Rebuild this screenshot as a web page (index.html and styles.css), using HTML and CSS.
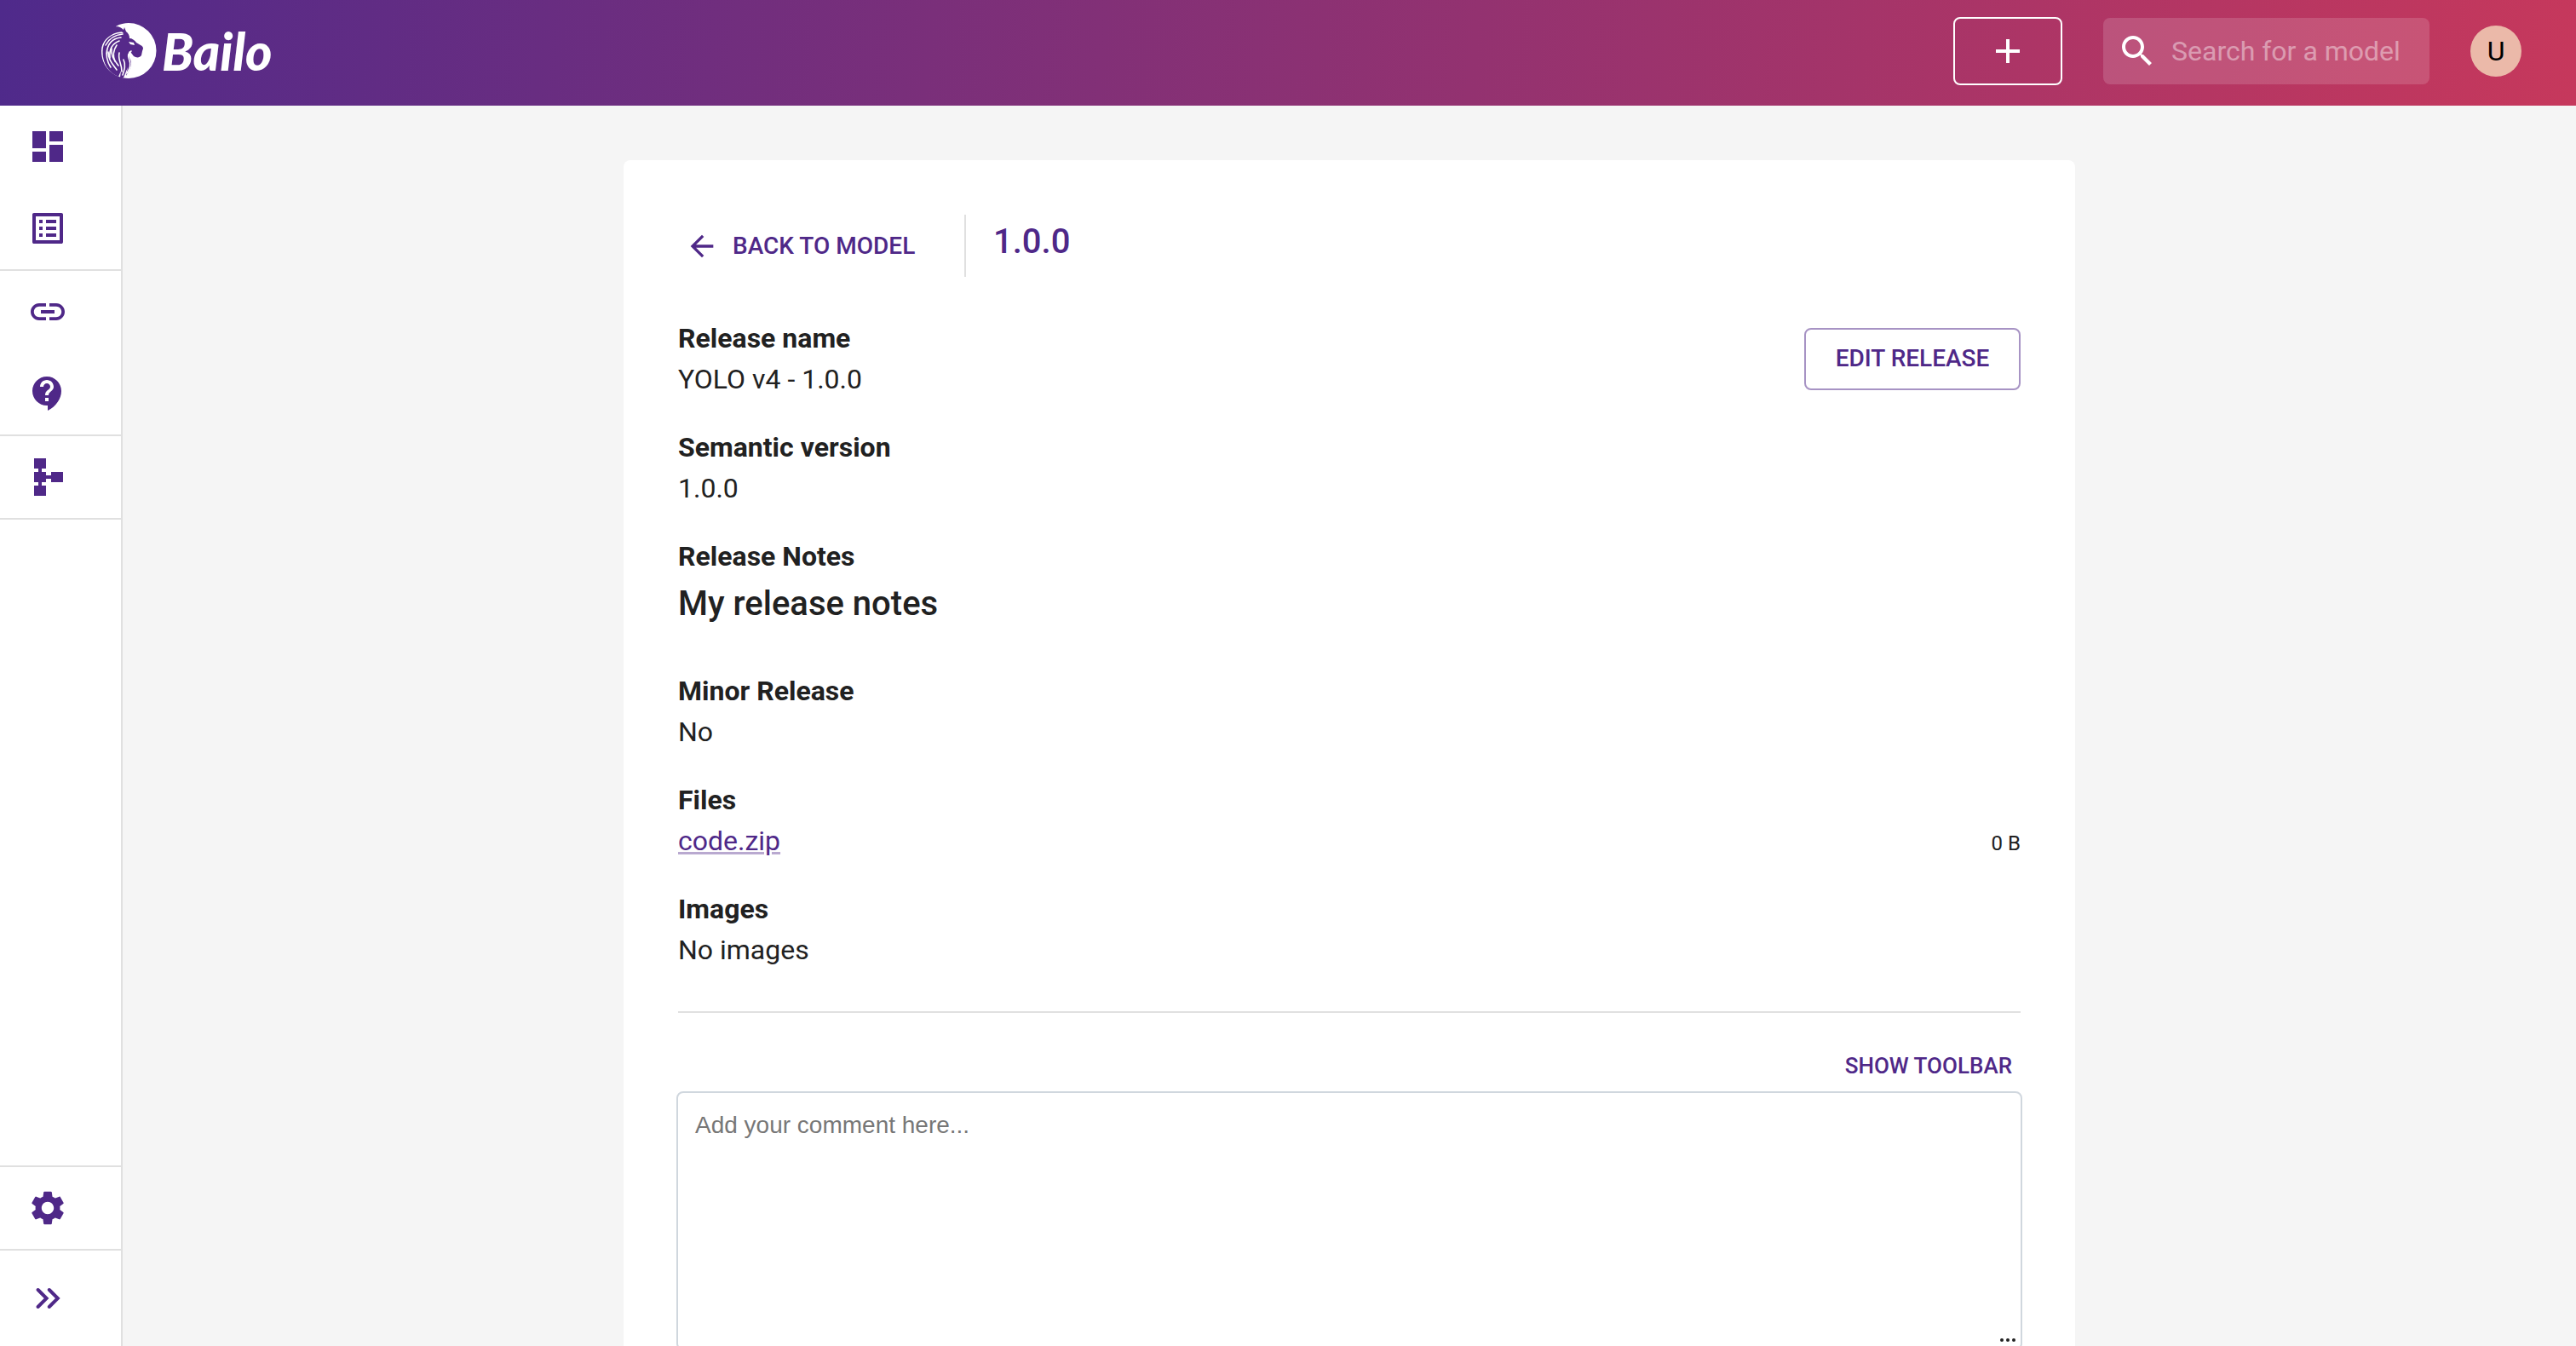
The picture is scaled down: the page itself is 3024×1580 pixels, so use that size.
FILE: index.html
```html
<!DOCTYPE html>
<html lang="en">
<head>
<meta charset="utf-8">
<title>Bailo</title>
<link rel="stylesheet" href="styles.css">
</head>
<body>
<div class="app">
  <header class="topbar">
    <a class="brand" href="#">
      <svg class="brand-mark" viewBox="0 0 66 66" aria-hidden="true">
        <path fill="#fff" d="M18 4C23 1 28 0 33 0a32.500 32.500 0 0 1 0 65C15 65 1 51 1 33 1 22 9 14 20 11l7-1-9-6Z"/>
        <path fill="#56298a" d="M18 4c4 0 7 2 9 4l1-3 2 5c3 2 4 5 4 8 3 0 6 2 8 5l5 3c2 1 3 2 3 4l-1 3-1 5c-2 3-6 3-9 1-2-2-3-5-5-6-2 3-1 7 1 10 2 4 1 10-5 19l2-10-5 12-4 0 1-8-3 7C9 58 2.500 47 2.500 34 2.500 23 9 15 20 12.500L27 12 18 4Z"/>
        <g fill="none" stroke="#fff" stroke-linecap="round" stroke-width="1.600">
          <path d="M26 13C17 14 10 18 6 26M24 17C14 18 8 25 7 36M22 21c-8 3-12 10-11 20M19 26c-4 6-5 12-2 19M8 30c-2 8 0 16 4 22"/>
          <path d="M9 34c0 9 5 14 10 21M13 30c-1 10 4 14 8 20M22 35c-2 9 3 12 3 22M27 43c3 6 1 12-1 18M36 33c-5 3-4 7-2 11 2 5 1 9-3 15"/>
        </g>
        <path fill="#fff" d="M33 22l6 1 1 3-5-1Z"/>
      </svg>
      <span class="brand-name">Bailo</span>
    </a>
    <div class="tools">
      <button class="add" type="button" aria-label="Create model">
        <svg class="icon" viewBox="0 0 24 24"><path d="M19 13h-6v6h-2v-6H5v-2h6V5h2v6h6z"/></svg>
      </button>
      <label class="search">
        <svg class="icon" viewBox="0 0 24 24" aria-hidden="true"><path d="M15.500 14h-.79l-.28-.27C15.410 12.590 16 11.110 16 9.500 16 5.910 13.090 3 9.500 3S3 5.910 3 9.500 5.910 16 9.500 16c1.610 0 3.090-.59 4.230-1.570l.27.28v.79l5 4.990L20.490 19zm-6 0C7.010 14 5 11.990 5 9.500S7.010 5 9.500 5 14 7.010 14 9.500 11.990 14 9.500 14"/></svg>
        <input class="search-input" type="text" placeholder="Search for a model" aria-label="Search for a model">
      </label>
      <button class="avatar" type="button">U</button>
    </div>
  </header>

  <div class="body">
    <nav class="sidebar">
      <div class="group">
        <a class="item" href="#" aria-label="Models"><svg class="icon" viewBox="0 0 24 24"><path d="M3 13h8V3H3zm0 8h8v-6H3zm10 0h8V11h-8zm0-18v6h8V3z"/></svg></a>
        <a class="item" href="#" aria-label="Reviews"><svg class="icon" viewBox="0 0 24 24"><path d="M11 7h6v2h-6zm0 4h6v2h-6zm0 4h6v2h-6zM7 7h2v2H7zm0 4h2v2H7zm0 4h2v2H7zM20.100 3H3.900c-.5 0-.9.4-.9.9v16.200c0 .4.4.9.9.9h16.200c.4 0 .9-.5.9-.9V3.900c0-.5-.5-.9-.9-.9M19 19H5V5h14z"/></svg></a>
      </div>
      <div class="group">
        <a class="item" href="#" aria-label="API"><svg class="icon" viewBox="0 0 24 24"><path d="M3.900 12c0-1.710 1.390-3.100 3.100-3.100h4V7H7c-2.760 0-5 2.240-5 5s2.240 5 5 5h4v-1.900H7c-1.710 0-3.100-1.390-3.100-3.100M8 13h8v-2H8zm9-6h-4v1.900h4c1.710 0 3.100 1.390 3.100 3.100s-1.390 3.100-3.100 3.100h-4V17h4c2.760 0 5-2.240 5-5s-2.240-5-5-5"/></svg></a>
        <a class="item" href="#" aria-label="Help"><svg class="icon" viewBox="0 0 24 24"><path d="M11.500 2C6.810 2 3 5.810 3 10.500S6.810 19 11.500 19h.5v3c4.860-2.340 8-7 8-11.500C20 5.810 16.190 2 11.500 2m1 14.500h-2v-2h2zm0-3.500h-2c0-3.250 3-3 3-5 0-1.100-.9-2-2-2s-2 .9-2 2h-2c0-2.210 1.790-4 4-4s4 1.790 4 4c0 2.500-3 2.750-3 5"/></svg></a>
      </div>
      <div class="group">
        <a class="item" href="#" aria-label="Schemas"><svg class="icon" viewBox="0 0 24 24"><path d="M14 9v2h-3V9H8.500V7H11V1H4v6h2.500v2H4v6h2.500v2H4v6h7v-6H8.500v-2H11v-2h3v2h7V9z"/></svg></a>
      </div>
      <div class="group group-settings">
        <a class="item" href="#" aria-label="Settings"><svg class="icon" viewBox="0 0 24 24"><path d="M19.140 12.940c.04-.3.06-.61.06-.94 0-.32-.02-.64-.07-.94l2.030-1.580c.18-.14.23-.41.12-.61l-1.920-3.320c-.12-.22-.37-.29-.59-.22l-2.390.96c-.5-.38-1.030-.7-1.620-.94l-.36-2.540c-.04-.24-.24-.41-.48-.41h-3.840c-.24 0-.43.17-.47.41l-.36 2.540c-.59.24-1.130.57-1.620.94l-2.390-.96c-.22-.08-.47 0-.59.22L2.740 8.870c-.12.21-.08.47.12.61l2.030 1.580c-.05.3-.09.63-.09.94s.02.64.07.94l-2.030 1.580c-.18.14-.23.41-.12.61l1.920 3.320c.12.22.37.29.59.22l2.390-.96c.5.38 1.030.7 1.620.94l.36 2.540c.05.24.24.41.48.41h3.840c.24 0 .44-.17.47-.41l.36-2.540c.59-.24 1.130-.56 1.620-.94l2.390.96c.22.08.47 0 .59-.22l1.920-3.320c.12-.22.07-.47-.12-.61zM12 15.600c-1.980 0-3.600-1.620-3.600-3.600s1.620-3.600 3.600-3.600 3.600 1.620 3.600 3.600-1.620 3.600-3.600 3.600"/></svg></a>
      </div>
      <button class="item expand" type="button" aria-label="Expand menu"><svg class="icon" viewBox="0 0 24 24"><path class="stroke" d="M6.300 7l5 5-5 5M12.900 7l5 5-5 5"/></svg></button>
    </nav>

    <main class="content">
      <article class="card">
        <div class="title-row">
          <a class="button back" href="#">
            <svg class="icon-small" viewBox="0 0 24 24" aria-hidden="true"><path d="M20 11H7.830l5.590-5.590L12 4l-8 8 8 8 1.410-1.410L7.830 13H20z"/></svg>
            BACK TO MODEL
          </a>
          <h1 class="title">1.0.0</h1>
        </div>
        <div class="details">
          <div class="name-row">
            <section>
              <h2 class="label">Release name</h2>
              <p class="value">YOLO v4 - 1.0.0</p>
            </section>
            <button class="button edit" type="button">EDIT RELEASE</button>
          </div>
          <section>
            <h2 class="label">Semantic version</h2>
            <p class="value">1.0.0</p>
          </section>
          <section>
            <h2 class="label">Release Notes</h2>
            <h3 class="notes">My release notes</h3>
          </section>
          <section>
            <h2 class="label">Minor Release</h2>
            <p class="value">No</p>
          </section>
          <section>
            <h2 class="label">Files</h2>
            <div class="file">
              <a class="file-link" href="#">code.zip</a>
              <span class="file-size">0 B</span>
            </div>
          </section>
          <section>
            <h2 class="label">Images</h2>
            <p class="value">No images</p>
          </section>
        </div>
        <div class="comment">
          <button class="button toolbar-toggle" type="button">SHOW TOOLBAR</button>
          <div class="editor">
            <textarea class="editor-input" placeholder="Add your comment here..." aria-label="Comment"></textarea>
            <svg class="grip" viewBox="0 0 18 4" aria-hidden="true"><circle cx="2" cy="2" r="2"/><circle cx="9" cy="2" r="2"/><circle cx="16" cy="2" r="2"/></svg>
          </div>
        </div>
      </article>
    </main>
  </div>
</div>
</body>
</html>
```
FILE: styles.css
```css
:root {
  --purple: #4f2888;
  --ink: #212121;
  --line: #e0e0e0;
}

* {
  box-sizing: border-box;
}

body {
  margin: 0;
  background: #f5f5f5;
  color: var(--ink);
  font-family: Roboto, "Liberation Sans", sans-serif;
  font-size: 32px;
  line-height: 48px;
}

h1, h2, h3, p {
  margin: 0;
}

a {
  color: inherit;
  text-decoration: none;
}

button {
  border: 0;
  background: none;
  color: inherit;
  font: inherit;
  cursor: pointer;
}

svg {
  display: block;
  flex: none;
  fill: currentColor;
}

.icon {
  width: 48px;
  height: 48px;
}

.icon-small {
  width: 40px;
  height: 40px;
}

.stroke {
  fill: none;
  stroke: currentColor;
  stroke-width: 2;
  stroke-linecap: round;
}

.app {
  display: flex;
  flex-direction: column;
  height: 100vh;
}

/* Top bar */

.topbar {
  display: flex;
  flex: none;
  align-items: center;
  justify-content: space-between;
  height: 124px;
  padding: 0 64px 4px 118px;
  background: linear-gradient(276deg, #c6385c, #4f2a8b);
  color: #fff;
}

.brand {
  display: flex;
  align-items: center;
  gap: 6px;
}

.brand-mark {
  width: 66px;
  height: 66px;
}

.brand-name {
  font: italic 900 60px/64px Lato, sans-serif;
}

.tools {
  display: flex;
  align-items: center;
  gap: 48px;
}

.add {
  display: grid;
  place-items: center;
  width: 128px;
  height: 80px;
  border: 2px solid #fff;
  border-radius: 8px;
}

.search {
  display: flex;
  align-items: center;
  gap: 16px;
  width: 383px;
  height: 78px;
  padding: 0 16px;
  border-radius: 8px;
  background: rgba(255, 255, 255, 0.15);
}

.search-input {
  flex: 1;
  min-width: 0;
  padding: 0;
  border: 0;
  background: none;
  color: #fff;
  font: inherit;
}

.search-input::placeholder {
  color: #fff;
  opacity: 0.42;
}

.avatar {
  width: 60px;
  height: 60px;
  padding: 0;
  border-radius: 50%;
  background: #ebb9a9;
  color: #000;
}

/* Side navigation */

.body {
  display: flex;
  flex: 1;
  min-height: 0;
}

.sidebar {
  display: flex;
  flex: none;
  flex-direction: column;
  width: 144px;
  border-right: 2px solid var(--line);
  background: #fff;
  color: var(--purple);
}

.group {
  border-bottom: 2px solid var(--line);
}

.group-settings {
  margin-top: auto;
  border-top: 2px solid var(--line);
}

.item {
  display: flex;
  align-items: center;
  height: 96px;
  padding: 0 32px;
}

.expand {
  height: 112px;
}

/* Release card */

.content {
  flex: 1;
  min-width: 0;
  overflow: auto;
  padding: 64px 48px;
  scrollbar-width: none;
}

.card {
  max-width: 1704px;
  margin: 0 auto;
  padding: 64px;
  border-radius: 8px;
  background: #fff;
}

.title-row {
  display: flex;
  gap: 32px;
  margin-bottom: 48px;
  color: var(--purple);
}

.button {
  display: flex;
  align-items: center;
  justify-content: center;
  border-radius: 8px;
  color: var(--purple);
  font-size: 28px;
  font-weight: 500;
}

.back {
  gap: 16px;
  justify-content: flex-start;
  min-width: 304px;
  height: 73px;
  padding: 0 8px;
}

.title {
  padding-left: 32px;
  border-left: 2px solid var(--line);
  font-size: 40px;
  font-weight: 500;
  line-height: 64px;
}

.details {
  display: flex;
  flex-direction: column;
  gap: 32px;
  padding-bottom: 48px;
  border-bottom: 2px solid var(--line);
}

.name-row {
  display: flex;
  align-items: center;
  justify-content: space-between;
}

.edit {
  width: 254px;
  height: 73px;
  padding: 0;
  border: 2px solid #a793c4;
}

.label {
  font-size: 32px;
  font-weight: 700;
  line-height: 48px;
}

.notes {
  margin-bottom: 14px;
  font-size: 40px;
  font-weight: 500;
  line-height: 64px;
}

.file {
  display: flex;
  align-items: baseline;
  justify-content: space-between;
}

.file-link {
  color: var(--purple);
  text-decoration: underline;
  text-decoration-color: #b9a9d0;
}

.file-size {
  font-size: 24px;
  line-height: 40px;
}

.comment {
  display: flex;
  flex-direction: column;
  padding-top: 32px;
}

.toolbar-toggle {
  align-self: flex-end;
  height: 60px;
  padding: 0 10px;
  font-size: 26px;
}

.editor {
  position: relative;
  height: 304px;
  margin: 0 -2px;
  border: 2px solid #d0d7de;
  border-radius: 8px;
}

.editor-input {
  display: block;
  width: 100%;
  height: 100%;
  padding: 20px;
  border: 0;
  background: none;
  resize: none;
  font: 28px/36px "Liberation Sans", sans-serif;
}

.editor-input::placeholder {
  color: #777;
}

.grip {
  position: absolute;
  right: 6px;
  bottom: 8px;
  width: 18px;
  height: 4px;
}
```
